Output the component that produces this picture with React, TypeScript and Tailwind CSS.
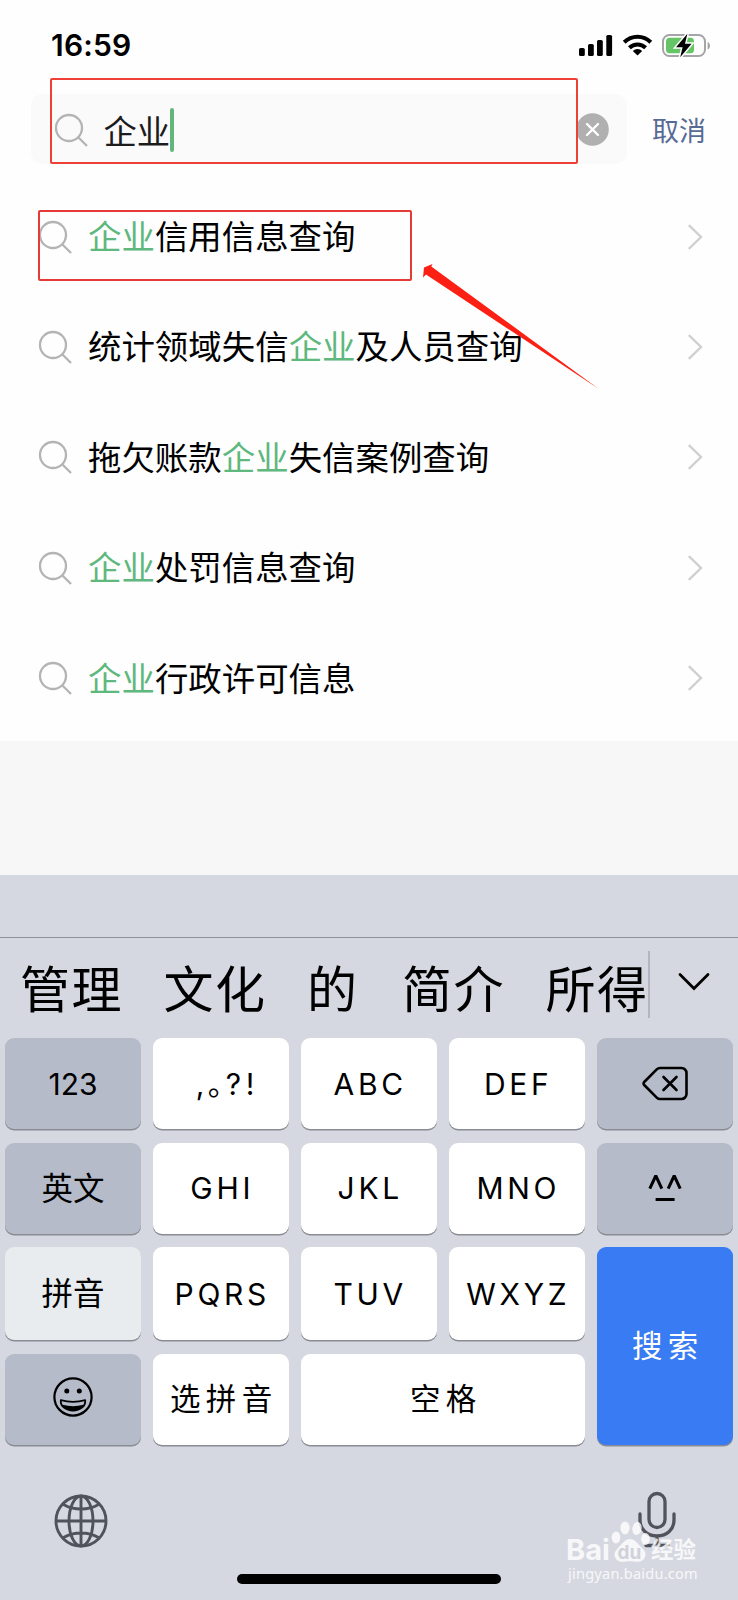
import React from "react";

type Part = { t: string; hit?: boolean };

const suggestions: Part[][] = [
  [{ t: "企业", hit: true }, { t: "信用信息查询" }],
  [{ t: "统计领域失信" }, { t: "企业", hit: true }, { t: "及人员查询" }],
  [{ t: "拖欠账款" }, { t: "企业", hit: true }, { t: "失信案例查询" }],
  [{ t: "企业", hit: true }, { t: "处罚信息查询" }],
  [{ t: "企业", hit: true }, { t: "行政许可信息" }],
];

function SearchIcon() {
  return (
    <svg className="h-[34px] w-[34px] shrink-0" viewBox="0 0 34 34" fill="none" stroke="#b4b4b4" strokeWidth="2.3">
      <circle cx="15" cy="15" r="13" />
      <path d="M24.2 24.2L33 33" />
    </svg>
  );
}

function StatusBar() {
  return (
    <div className="flex h-[94px] items-start justify-between pl-[51px] pr-[27px] pt-[27px]">
      <span className="font-['Inter'] text-[30px] font-semibold leading-[37px] tracking-[0.2px] text-black">16:59</span>
      <div className="flex items-center pt-[6px]">
        <svg className="h-[24px] w-[34px]" viewBox="0 0 34 24">
          <rect x="0" y="14" width="5.8" height="8" rx="1.6" />
          <rect x="9" y="10" width="5.8" height="12" rx="1.6" />
          <rect x="18" y="6" width="5.8" height="16" rx="1.6" />
          <rect x="27.3" y="1" width="5.8" height="21" rx="1.6" />
        </svg>
        <svg className="ml-[9px] h-[24px] w-[31px]" viewBox="0 0 31 24" fill="none" stroke="#000" strokeWidth="4">
          <path d="M2.2 8.2A19 19 0 0 1 28.8 8.2" />
          <path d="M7.4 13.8A11.6 11.6 0 0 1 23.6 13.8" />
          <path d="M15.5 21.6L10.8 17A6.6 6.6 0 0 1 20.2 17Z" fill="#000" stroke="none" />
        </svg>
        <svg className="ml-[9px] h-[26px] w-[49px]" viewBox="0 0 49 26">
          <rect x="1" y="2" width="42" height="21" rx="6.5" fill="none" stroke="#a5a5a8" strokeWidth="2" />
          <path d="M45.6 9v7.6c1.6-.6 2.4-2.1 2.4-3.8s-.8-3.2-2.4-3.8z" fill="#a5a5a8" />
          <rect x="4" y="4.8" width="28" height="15.4" rx="3.5" fill="#65c466" />
          <path d="M25.4 .8L14 14.3h6.6L18.2 24.2L29.6 10.7H23z" fill="#000" stroke="#fff" strokeWidth="3" paintOrder="stroke" />
        </svg>
      </div>
    </div>
  );
}

function SearchBar() {
  return (
    <div className="flex h-[70px] items-center pl-[31px]">
      <div className="flex h-[70px] w-[596px] items-center rounded-[12px] bg-[#fafafa] pl-[23px] pr-[18px] pt-px">
        <SearchIcon />
        <span className="ml-[15.5px] text-[33.3px] leading-[48px] text-[#1c1c1c]">企业</span>
        <span className="-ml-[0.5px] h-[44px] w-[4px] rounded-full bg-[#62b67c]" />
        <svg className="ml-auto h-[33px] w-[33px]" viewBox="0 0 33 33">
          <circle cx="16.5" cy="16.5" r="16.3" fill="#b0b0b0" />
          <path d="M11 11l11 11M22 11L11 22" stroke="#fff" strokeWidth="2.4" strokeLinecap="round" />
        </svg>
      </div>
      <span className="ml-[25px] pt-[2px] text-[27px] leading-[40px] text-[#576b95]">取消</span>
    </div>
  );
}

function SuggestionRow({ parts }: { parts: Part[] }) {
  return (
    <div className="flex h-[110.4px] items-center pl-[38px] pr-[35px]">
      <SearchIcon />
      <span className="ml-[16px] pb-[3.5px] text-[33.45px] leading-[48px] text-black">
        {parts.map((p, i) => (
          <span key={i} className={p.hit ? "text-[#5fb87d]" : ""}>{p.t}</span>
        ))}
      </span>
      <svg className="ml-auto h-[26px] w-[16px]" viewBox="0 0 16 26" fill="none" stroke="#d0d0d0" strokeWidth="2.4">
        <path d="M1.8 1.2L14 13L1.8 24.8" />
      </svg>
    </div>
  );
}

type KeyProps = { children: React.ReactNode; tone?: string; className?: string };

function Key({ children, tone = "bg-white text-black", className = "" }: KeyProps) {
  return (
    <div className={`flex items-center justify-center rounded-[9px] text-[30px] leading-none shadow-[0_1.5px_0_#898c93] ${tone} ${className}`}>
      {children}
    </div>
  );
}

const dark = "bg-[#b5bbc8] text-black";

function Latin({ children }: { children: string }) {
  return <span className="-mr-[2.5px] font-['Inter'] text-[30px] tracking-[3.7px]">{children}</span>;
}

function Wide({ children }: { children: string }) {
  return <span className="-mr-[5.5px] pb-[3px] text-[30.5px] tracking-[5.3px]">{children}</span>;
}

function Keys() {
  return (
    <div className="grid grid-cols-[repeat(5,136px)] grid-rows-[91px_91px_93px_91px] gap-x-[12px] gap-y-[13.5px] pl-[5px]">
      <Key tone={dark}><span className="font-['Inter'] text-[30px]">123</span></Key>
      <Key>
        <span className="flex pl-[8px] font-['Inter']">
          <span className="w-[12px]">,</span>
          <span className="-mt-[2px] w-[18px] font-['Noto_Sans_CJK_SC'] [font-feature-settings:'halt']">。</span>
          <span className="w-[20px]">?</span>
          <span>!</span>
        </span>
      </Key>
      <Key><Latin>ABC</Latin></Key>
      <Key><Latin>DEF</Latin></Key>
      <Key tone={dark}>
        <svg className="h-[35px] w-[46px]" viewBox="0 0 46 35" fill="none" stroke="#000" strokeWidth="2.6" strokeLinecap="round" strokeLinejoin="round">
          <path d="M18 2h21.5a5 5 0 0 1 5 5v21a5 5 0 0 1-5 5H18c-1.2 0-2.2-.4-3-1.2L2.2 19c-.9-.9-.9-2.1 0-3L15 3.200C15.8 2.4 16.8 2 18 2z" />
          <path d="M21.5 11l13 13M34.5 11l-13 13" />
        </svg>
      </Key>

      <Key tone={dark}><span className="pb-[3px] text-[31.5px]">英文</span></Key>
      <Key><Latin>GHI</Latin></Key>
      <Key><Latin>JKL</Latin></Key>
      <Key><Latin>MNO</Latin></Key>
      <Key tone={dark}>
        <svg className="h-[30px] w-[36px]" viewBox="0 0 36 30" fill="none" stroke="#000" strokeWidth="3">
          <path d="M2.8 15.6L8.4 3.6H9.2L14.8 15.6M21.2 15.6L26.8 3.6H27.6L33.2 15.6M8.6 26.6h19" />
        </svg>
      </Key>

      <Key tone="bg-[#e8ecef] text-black"><span className="pb-[4px] text-[31.5px]">拼音</span></Key>
      <Key><Latin>PQRS</Latin></Key>
      <Key><Latin>TUV</Latin></Key>
      <Key><Latin>WXYZ</Latin></Key>
      <Key tone="bg-[#397bf2] text-white" className="row-span-2"><Wide>搜索</Wide></Key>

      <Key tone={dark}>
        <svg className="-mt-[4px] h-[42px] w-[42px]" viewBox="0 0 42 42">
          <circle cx="21" cy="21" r="18.6" fill="none" stroke="#000" strokeWidth="2.2" />
          <circle cx="14.8" cy="15" r="2.5" />
          <circle cx="27.3" cy="15" r="2.5" />
          <path d="M8.8 24.2c8 2.2 16.4 2.2 24.4 0c.5 6-5 10.3-12.2 10.3S8.3 30.2 8.800 24.2z" fill="none" stroke="#000" strokeWidth="1.8" strokeLinejoin="round" />
          <path d="M10.5 28.8c7 1.8 14 1.8 21 0c-1.500 3.8-5.5 5.7-10.5 5.7s-9-1.9-10.5-5.7z" />
        </svg>
      </Key>
      <Key><Wide>选拼音</Wide></Key>
      <Key className="col-span-2"><Wide>空格</Wide></Key>
    </div>
  );
}

function Watermark() {
  return (
    <div className="absolute left-[566px] top-[1518px] flex w-[134px] flex-col text-white/80">
      <div className="flex h-[46px] items-end">
        <span className="w-[45px] shrink-0 font-['Inter'] text-[29px] font-bold leading-[29px]">Bai</span>
        <svg className="h-[44px] w-[40px] shrink-0" viewBox="0 0 40 44" fill="currentColor">
          <ellipse cx="5" cy="17.5" rx="4.3" ry="6" />
          <ellipse cx="14" cy="8" rx="4.6" ry="6.5" />
          <ellipse cx="26" cy="8.5" rx="4.6" ry="6.5" transform="rotate(10 26 8.5)" />
          <ellipse cx="34.5" cy="19" rx="4.3" ry="6" />
          <path d="M19 19c5 0 7.5 4.5 10.5 7.5c4 3.5 6 6 4.5 10.5c-1.6 5-7 5-10.5 4.5c-3-.4-6-.4-9 0c-3.5.5-8.9.5-10.5-4.5c-1.5-4.5 1-7 4.5-10.5c3-3 5.5-7.5 10.5-7.5z" />
          <text x="18.5" y="38.5" textAnchor="middle" fontFamily="Inter" fontSize="19" fontWeight="700" fill="#cfd2da">du</text>
        </svg>
        <span className="shrink-0 pb-[2px] text-[22.5px] font-bold leading-[28px]">经验</span>
      </div>
      <span className="pl-[2px] pt-px font-['Noto_Sans'] text-[14.5px] leading-[17px] tracking-[0.25px]">jingyan.baidu.com</span>
    </div>
  );
}

export default function App() {
  return (
    <div className="relative flex h-[1600px] w-[738px] flex-col overflow-hidden bg-[#f7f7f7] font-['Noto_Sans_CJK_SC',sans-serif]">
      <div className="h-[741px] shrink-0 bg-[#fefefe]">
        <StatusBar />
        <SearchBar />
        <div className="pt-[17.5px]">
          {suggestions.map((parts, i) => (
            <SuggestionRow key={i} parts={parts} />
          ))}
        </div>
      </div>

      <div className="mt-[134px] flex flex-1 flex-col bg-[#d5d8e0]">
        <div className="h-[63px] shrink-0 border-b border-[#8f929a]" />
        <div className="flex h-[100px] shrink-0 items-start">
          <div className="flex h-[100px] w-[648px] shrink-0 gap-[40.5px] whitespace-nowrap pl-[20px] pt-[11px] text-[50px] leading-[74px] tracking-[1.5px] text-black">
            <span>管理</span>
            <span>文化</span>
            <span>的</span>
            <span className="ml-[3px]">简介</span>
            <span>所得</span>
          </div>
          <div className="mt-[13px] h-[67px] w-[2px] bg-[#b3b6be]" />
          <svg className="ml-[28px] mt-[34px] h-[20px] w-[32px]" viewBox="0 0 32 20" fill="none" stroke="#000" strokeWidth="2.8" strokeLinecap="round">
            <path d="M2 2.5L16 16.5L30 2.5" />
          </svg>
        </div>
        <Keys />
        <div className="flex items-start justify-between pl-[54px] pr-[62px] pt-[45px]">
          <svg className="mt-[4px] h-[54px] w-[54px]" viewBox="0 0 54 54" fill="none" stroke="#50535c" strokeWidth="2.9">
            <circle cx="27" cy="27" r="25" />
            <ellipse cx="27" cy="27" rx="12" ry="25" />
            <path d="M27 2v50M2 27h50M9.5 10.5c10 6 25 6 35 0M9.5 43.5c10-6 25-6 35 0" />
          </svg>
          <svg className="h-[58px] w-[38px]" viewBox="0 0 38 58" fill="none" stroke="#50535c" strokeWidth="3.3" strokeLinecap="round">
            <rect x="11" y="3.5" width="16" height="34" rx="8" />
            <path d="M2 24v6c0 9.5 7 16 17 16s17-6.5 17-16v-6M19 46v9M8 55.5h22" />
          </svg>
        </div>
      </div>

      <div className="absolute left-[237px] top-[1574px] h-[10px] w-[264px] rounded-full bg-black" />
      <div className="absolute left-[50px] top-[78px] h-[86px] w-[528px] rounded-[2px] border-2 border-[#ee4037]" />
      <div className="absolute left-[38px] top-[210px] h-[71px] w-[374px] rounded-[2px] border-2 border-[#e53a35]" />
      <svg className="absolute left-[420px] top-[260px] h-[132px] w-[182px]" viewBox="420 260 182 132" fill="#fb2013">
        <path d="M424 267.5L432.5 264L431.3 266.5L598.5 388.8L426 274.5L423 277.5Z" />
      </svg>
      <Watermark />
    </div>
  );
}
